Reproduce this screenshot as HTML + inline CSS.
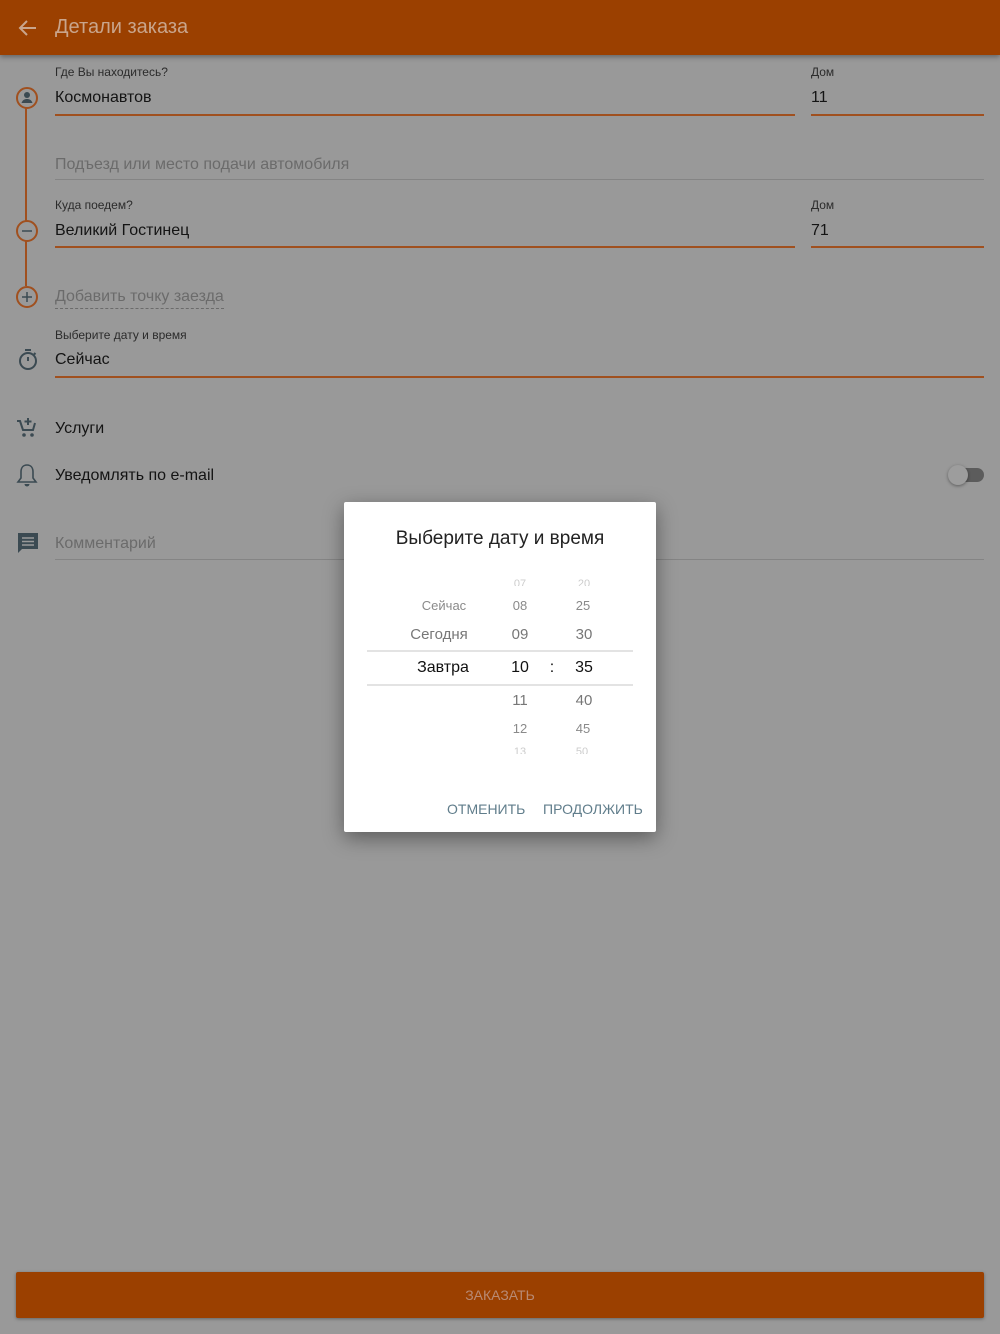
<!DOCTYPE html>
<html><head><meta charset="utf-8"><style>
*{margin:0;padding:0;box-sizing:border-box}
body{width:1000px;height:1334px;background:#999;font-family:"Liberation Sans",sans-serif;position:relative;overflow:hidden}
.a{position:absolute}
.hdr{left:0;top:0;width:1000px;height:55px;background:#9b4000;box-shadow:0 2px 5px rgba(0,0,0,.35)}
.lbl{font-size:12px;color:#2b2b2b}
.val{font-size:16px;color:#141414}
.ph{font-size:16px;color:#6b6b6b}
.ol{height:2px;background:#a0501f}
.gl{height:1px;background:#848484}
.dlg{left:344px;top:502px;width:312px;height:330px;background:#fff;box-shadow:0 6px 20px rgba(0,0,0,.4);border-radius:2px}
.c{position:absolute;text-align:center;font-size:15px}
</style></head><body>
<div class="a hdr">
<svg class="a" style="left:16px;top:16px" width="24" height="24" viewBox="0 0 24 24"><path d="M20 12H5M11 5l-7 7 7 7" stroke="#c9a58c" stroke-width="2" fill="none"/></svg>
<div class="a" style="left:55px;top:16px;font-size:20px;color:#c9a58c">Детали заказа</div>
</div>

<div class="a" style="left:25px;top:108px;width:2px;height:178px;background:#a0501f"></div>
<svg class="a" style="left:15px;top:86px" width="24" height="24" viewBox="0 0 24 24"><circle cx="12" cy="12" r="10" fill="#999" stroke="#a0501f" stroke-width="2"/><circle cx="12" cy="9" r="3" fill="#3b4a52"/><path d="M6.5 17c1-3 3-4 5.5-4s4.5 1 5.5 4z" fill="#3b4a52"/></svg>
<svg class="a" style="left:15px;top:219px" width="24" height="24" viewBox="0 0 24 24"><circle cx="12" cy="12" r="10" fill="#999" stroke="#a0501f" stroke-width="2"/><path d="M7 12h10" stroke="#3b4a52" stroke-width="1.5"/></svg>
<svg class="a" style="left:15px;top:285px" width="24" height="24" viewBox="0 0 24 24"><circle cx="12" cy="12" r="10" fill="#999" stroke="#a0501f" stroke-width="2"/><path d="M7 12h10M12 7v10" stroke="#3b4a52" stroke-width="1.5"/></svg>

<div class="a lbl" style="left:55px;top:65px">Где Вы находитесь?</div>
<div class="a val" style="left:55px;top:89px">Космонавтов</div>
<div class="a ol" style="left:55px;top:114px;width:740px"></div>
<div class="a lbl" style="left:811px;top:65px">Дом</div>
<div class="a val" style="left:811px;top:89px">11</div>
<div class="a ol" style="left:811px;top:114px;width:173px"></div>

<div class="a ph" style="left:55px;top:156px">Подъезд или место подачи автомобиля</div>
<div class="a gl" style="left:55px;top:179px;width:929px"></div>

<div class="a lbl" style="left:55px;top:198px">Куда поедем?</div>
<div class="a val" style="left:55px;top:222px">Великий Гостинец</div>
<div class="a ol" style="left:55px;top:246px;width:740px"></div>
<div class="a lbl" style="left:811px;top:198px">Дом</div>
<div class="a val" style="left:811px;top:222px">71</div>
<div class="a ol" style="left:811px;top:246px;width:173px"></div>

<div class="a ph" style="left:55px;top:288px;border-bottom:1px dashed #6b6b6b;padding-bottom:2px">Добавить точку заезда</div>

<div class="a lbl" style="left:55px;top:328px">Выберите дату и время</div>
<svg class="a" style="left:16px;top:348px" width="24" height="24" viewBox="0 0 24 24"><circle cx="12" cy="13" r="8" fill="none" stroke="#3b4a52" stroke-width="2"/><path d="M9 2h6M12 9v4M18 5l1.5 1.5" stroke="#3b4a52" stroke-width="2"/></svg>
<div class="a val" style="left:55px;top:351px">Сейчас</div>
<div class="a ol" style="left:55px;top:376px;width:929px"></div>

<svg class="a" style="left:15px;top:416px" width="24" height="24" viewBox="0 0 24 24"><path d="M2 5h3l3 9h10l2-7" stroke="#3b4a52" stroke-width="2" fill="none"/><path d="M13 2v7M9.5 5.5h7" stroke="#3b4a52" stroke-width="2"/><circle cx="9" cy="19" r="1.8" fill="#3b4a52"/><circle cx="17" cy="19" r="1.8" fill="#3b4a52"/></svg>
<div class="a val" style="left:55px;top:420px">Услуги</div>

<svg class="a" style="left:15px;top:463px" width="24" height="26" viewBox="0 0 24 26"><path d="M12 2c-4 0-6 3-6 7v6l-3 4h18l-3-4V9c0-4-2-7-6-7z" fill="none" stroke="#3b4a52" stroke-width="1.6"/><path d="M9.5 21a2.5 2.5 0 005 0z" fill="#3b4a52"/></svg>
<div class="a val" style="left:55px;top:467px">Уведомлять по e-mail</div>
<div class="a" style="left:950px;top:468px;width:34px;height:14px;border-radius:7px;background:#5c5c5c"></div>
<div class="a" style="left:948px;top:465px;width:20px;height:20px;border-radius:50%;background:#9d9d9d;box-shadow:0 1px 3px rgba(0,0,0,.4)"></div>

<svg class="a" style="left:17px;top:532px" width="22" height="22" viewBox="0 0 22 22"><path d="M1 1h20v16H5l-4 4z" fill="#3b4a52"/><path d="M5 6h12M5 9.5h12M5 13h12" stroke="#999" stroke-width="1.5"/></svg>
<div class="a ph" style="left:55px;top:535px">Комментарий</div>
<div class="a gl" style="left:55px;top:559px;width:929px"></div>

<div class="a" style="left:16px;top:1272px;width:968px;height:46px;background:#9b4000;border-radius:2px;box-shadow:0 1px 3px rgba(0,0,0,.35);text-align:center;line-height:46px;font-size:14px;color:#b88a74">ЗАКАЗАТЬ</div>

<div class="a dlg">
<div class="c" style="left:0;width:312px;top:26px;font-size:19px;color:#222">Выберите дату и время</div>
<div class="a" style="left:23px;top:148px;width:266px;height:2px;background:#e3e3e3"></div>
<div class="a" style="left:23px;top:182px;width:266px;height:2px;background:#e3e3e3"></div>
<div class="c" style="left:50px;width:100px;top:96px;font-size:13px;color:#8a8a8a">Сейчас</div>
<div class="c" style="left:45px;width:100px;top:124px;color:#777">Сегодня</div>
<div class="c" style="left:49px;width:100px;top:157px;color:#111;font-size:16px">Завтра</div>
<div class="c" style="left:156px;width:40px;top:76px;font-size:11px;color:#ccc;height:8px;overflow:hidden">07</div>
<div class="c" style="left:156px;width:40px;top:96px;font-size:13px;color:#8a8a8a">08</div>
<div class="c" style="left:156px;width:40px;top:124px;color:#777">09</div>
<div class="c" style="left:156px;width:40px;top:157px;color:#111;font-size:16px">10</div>
<div class="c" style="left:198px;width:20px;top:157px;color:#111;font-size:16px">:</div>
<div class="c" style="left:156px;width:40px;top:190px;color:#777">11</div>
<div class="c" style="left:156px;width:40px;top:219px;font-size:13px;color:#8a8a8a">12</div>
<div class="c" style="left:156px;width:40px;top:244px;font-size:11px;color:#ccc;height:8px;overflow:hidden">13</div>
<div class="c" style="left:220px;width:40px;top:76px;font-size:11px;color:#ccc;height:8px;overflow:hidden">20</div>
<div class="c" style="left:219px;width:40px;top:96px;font-size:13px;color:#8a8a8a">25</div>
<div class="c" style="left:220px;width:40px;top:124px;color:#777">30</div>
<div class="c" style="left:220px;width:40px;top:157px;color:#111;font-size:16px">35</div>
<div class="c" style="left:220px;width:40px;top:190px;color:#777">40</div>
<div class="c" style="left:219px;width:40px;top:219px;font-size:13px;color:#8a8a8a">45</div>
<div class="c" style="left:218px;width:40px;top:244px;font-size:11px;color:#ccc;height:8px;overflow:hidden">50</div>
<div class="a" style="left:103px;top:299px;font-size:14px;color:#607d8b">ОТМЕНИТЬ</div>
<div class="a" style="left:199px;top:299px;font-size:14px;color:#607d8b">ПРОДОЛЖИТЬ</div>
</div>
</body></html>
